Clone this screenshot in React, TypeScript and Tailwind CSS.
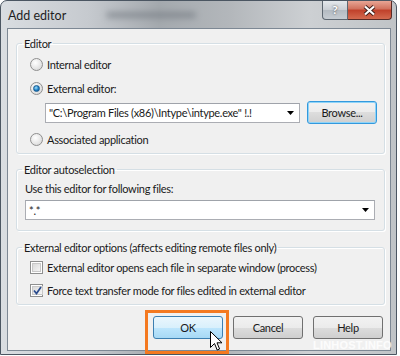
import React from 'react';

const font = { fontFamily: 'Lato, "Segoe UI", sans-serif' };
const txt = 'text-[11px] leading-[15px] tracking-[-0.3px] text-[#1a1a1a]';

function Radio({ checked }: { checked?: boolean }) {
  return (
    <span className="relative w-[13px] h-[13px] rounded-full border border-[#8f8f8f] bg-[radial-gradient(circle_at_40%_35%,#ffffff,#e4e4e4_60%,#cfcfcf)] flex items-center justify-center shrink-0">
      {checked && (
        <span className="w-[7px] h-[7px] rounded-full bg-[radial-gradient(circle_at_40%_35%,#9fe2ff,#1d7ec4_55%,#0a4d8a)] border border-[#1b5d91]" />
      )}
    </span>
  );
}

function Check({ checked }: { checked?: boolean }) {
  return (
    <span className="w-[13px] h-[13px] border border-[#8e8f8f] bg-white p-[1px] shrink-0 flex">
      <span className="flex-1 border border-[#c8c8c8] bg-[linear-gradient(135deg,#dadada,#f5f5f5)] flex items-center justify-center">
        {checked && (
          <svg width="9" height="9" viewBox="0 0 9 9">
            <path d="M1 4.5 L3.5 7.5 L8 1" fill="none" stroke="#2a4b8d" strokeWidth="1.7" />
          </svg>
        )}
      </span>
    </span>
  );
}

function Combo({ text, width }: { text: string; width: string }) {
  return (
    <div className={`${width} h-[20px] bg-white border border-[#abadb3] border-t-[#9fa3aa] flex items-center pl-[3px] pr-[5px]`}>
      <span className={`flex-1 ${txt} whitespace-nowrap overflow-hidden`}>{text}</span>
      <svg width="7" height="4" viewBox="0 0 7 4">
        <path d="M0 0 H7 L3.5 4 Z" fill="#000" />
      </svg>
    </div>
  );
}

function Button({ label, kind }: { label: string; kind?: 'focus' | 'hover' }) {
  const cls =
    kind === 'hover'
      ? 'border-[#3c7fb1] bg-[linear-gradient(#eaf6fd_0%,#d9f0fc_50%,#bee6fd_50%,#a7d9f5_100%)]'
      : kind === 'focus'
      ? 'border-[#3399dd] shadow-[inset_0_0_0_1px_#8fd4f8] bg-[linear-gradient(#f2f2f2_0%,#ebebeb_50%,#dddddd_50%,#cfcfcf_100%)]'
      : 'border-[#707070] bg-[linear-gradient(#f2f2f2_0%,#ebebeb_50%,#dddddd_50%,#cfcfcf_100%)]';
  return (
    <div className={`w-[70px] h-[23px] rounded-[3px] border ${cls} flex items-center justify-center ${txt}`}>
      {label}
    </div>
  );
}

function Group({ title, children, className }: { title: string; children: React.ReactNode; className: string }) {
  return (
    <fieldset className={`ml-[8px] mr-[5px] border border-[#d5dfe5] rounded-[3px] shadow-[inset_1px_1px_0_#ffffff,1px_1px_0_#ffffff] ${className}`}>
      <legend className={`ml-[5px] px-[2px] ${txt} whitespace-nowrap`}>{title}</legend>
      {children}
    </fieldset>
  );
}

export default function App() {
  return (
    <div className="w-[400px] h-[356px] bg-white relative overflow-hidden" style={font}>
      <div className="w-[397px] h-[355px] rounded-t-[7px] border border-[#4b5662] bg-[linear-gradient(90deg,#d9dde1_0%,#c6cacf_22%,#a4a9ae_40%,#b3b7bb_58%,#cdd0d3_78%,#c0c4c7_100%)] flex flex-col">
        {/* title bar */}
        <div className="h-[27px] flex items-start relative">
          <span className="ml-[7px] mt-[6px] text-[12.5px] leading-[17px] text-[#1e1e1e]">Add editor</span>
          <span className="ml-[40px] mt-[11px] w-[90px] h-[6px] rounded-full bg-[#6f767d] blur-[3px] opacity-60" />
          <div className="ml-auto mr-[4px] flex">
            <div className="w-[26px] h-[19px] rounded-bl-[4px] border border-t-0 border-[#5c6670] bg-[linear-gradient(#e4e8ec,#c9ced4_50%,#b3bac1_50%,#c6ccd2)] flex items-center justify-center text-[12px] font-bold text-white [text-shadow:0_0_2px_#333]">
              ?
            </div>
            <div className="w-[44px] h-[19px] rounded-br-[4px] border border-t-0 border-l-0 border-[#5a2b26] bg-[linear-gradient(#e8a595,#d0705c_45%,#c0402a_50%,#d46a4f)] flex items-center justify-center">
              <svg width="13" height="11" viewBox="0 0 13 11">
                <path d="M2 1.5 L11 9.5 M11 1.5 L2 9.5" stroke="#3b1c18" strokeWidth="4" />
                <path d="M2 1.5 L11 9.5 M11 1.5 L2 9.5" stroke="#ffffff" strokeWidth="2.2" />
              </svg>
            </div>
          </div>
        </div>

        {/* client area */}
        <div className="ml-[6px] mr-[5px] h-[323px] border border-[#7d8894] bg-[#f0f0f0] flex flex-col">
          <Group title="Editor" className="mt-[7px] pb-[4px]">
            <div className={`mt-[3px] ml-[13px] h-[20px] flex items-center gap-[4px] ${txt}`}>
              <Radio />
              <span>Internal editor</span>
            </div>
            <div className={`mt-[4px] ml-[13px] h-[20px] flex items-center gap-[4px] ${txt}`}>
              <Radio checked />
              <span>External editor:</span>
            </div>
            <div className="mt-[3px] ml-[28px] flex items-center gap-[7px]">
              <Combo text={'"C:\\Program Files (x86)\\Intype\\intype.exe" !.!'} width="w-[255px]" />
              <Button label="Browse..." kind="focus" />
            </div>
            <div className={`mt-[5px] ml-[13px] h-[20px] flex items-center gap-[4px] ${txt}`}>
              <Radio />
              <span>Associated application</span>
            </div>
          </Group>

          <Group title="Editor autoselection" className="mt-[8px] pb-[10px]">
            <div className={`mt-[4px] ml-[8px] h-[16px] ${txt}`}>Use this editor for following files:</div>
            <div className="mt-[3px] ml-[8px]">
              <Combo text="*.*" width="w-[350px]" />
            </div>
          </Group>

          <Group title="External editor options (affects editing remote files only)" className="mt-[9px] pb-[5px]">
            <div className={`mt-[3px] ml-[13px] h-[18px] flex items-center gap-[4px] whitespace-nowrap ${txt}`}>
              <Check />
              <span>External editor opens each file in separate window (process)</span>
            </div>
            <div className={`mt-[5px] ml-[13px] h-[18px] flex items-center gap-[4px] whitespace-nowrap ${txt}`}>
              <Check checked />
              <span>Force text transfer mode for files edited in external editor</span>
            </div>
          </Group>

          <div className="mt-[11px] pr-[7px] flex justify-end gap-[10px]">
            <Button label="OK" kind="hover" />
            <Button label="Cancel" />
            <Button label="Help" />
          </div>
        </div>
      </div>

      {/* highlight around OK */}
      <div className="absolute left-[145px] top-[310px] w-[84px] h-[44px] border-[3px] border-[#f47920]" />

      {/* mouse pointer */}
      <svg className="absolute left-[210px] top-[331px]" width="13" height="21" viewBox="0 0 13 21">
        <path d="M0.5 0.5 V16.5 L4.5 12.5 L7.2 19 L9.6 18 L7 11.8 L12 11.8 Z" fill="#ffffff" stroke="#000000" strokeWidth="1" />
      </svg>

      {/* watermark */}
      <span className="absolute left-[313px] top-[337px] text-[11px] font-bold text-white/80 tracking-[0.2px]" style={{ fontFamily: '"Liberation Sans", sans-serif' }}>
        LINHOST.INFO
      </span>
    </div>
  );
}
